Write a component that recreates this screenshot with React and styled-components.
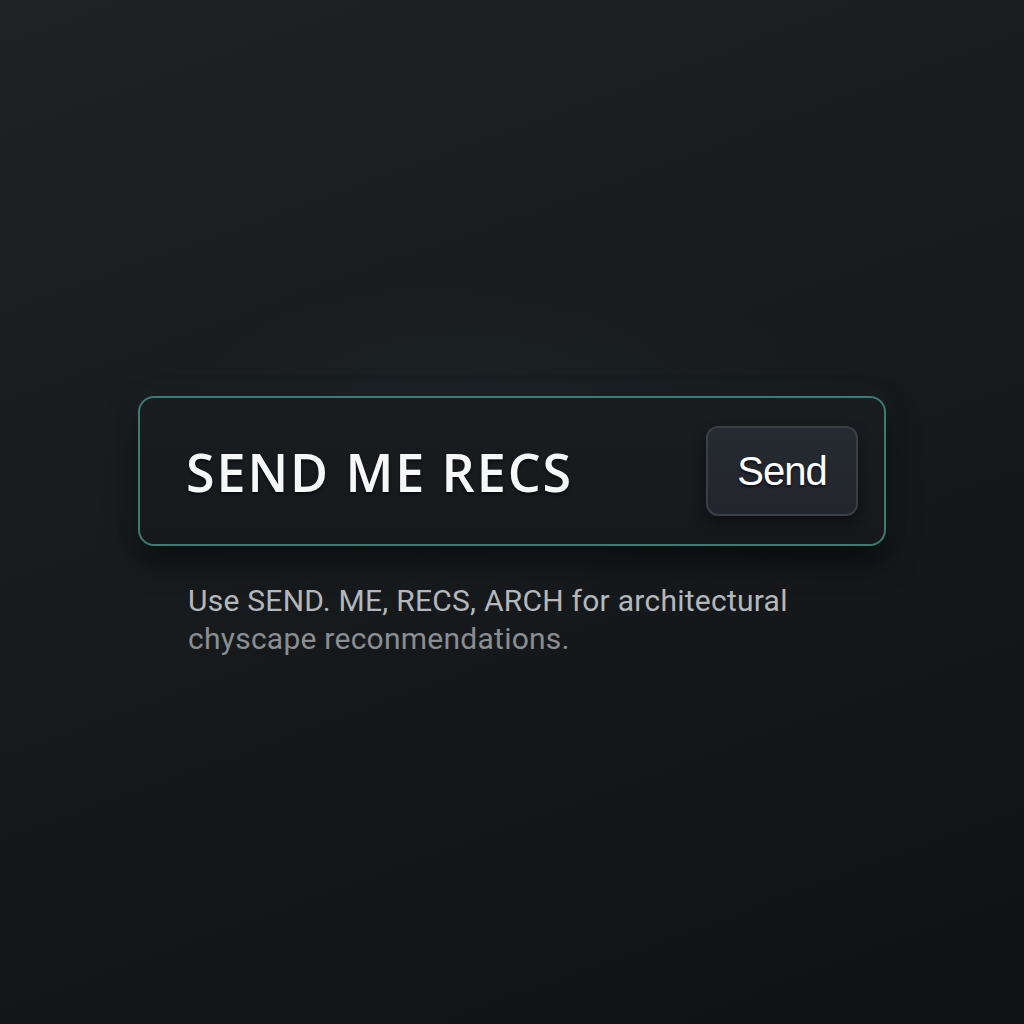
import React from 'react'
import styled, { createGlobalStyle } from 'styled-components';

const Global = createGlobalStyle`
  html, body {
    margin: 0;
    padding: 0;
    background: #121417;
  }
`;

function App() {
  return (
    <>
      <Global />
      <Page>
        <Column>
          <InputBox>
            <Query>SEND ME RECS</Query>
            <SendButton>Send</SendButton>
          </InputBox>
          <Hint>
            <HintLine>Use SEND. ME, RECS, ARCH for architectural</HintLine>
            <HintLine dim>chyscape reconmendations.</HintLine>
          </Hint>
        </Column>
      </Page>
    </>
  )
}

export default App;

const Page = styled.div`
  width: 1024px;
  height: 1024px;
  box-sizing: border-box;
  padding: 396px 0 0 138px;
  background:
    radial-gradient(ellipse 520px 240px at 510px 440px, rgba(40, 70, 70, 0.14), transparent 70%),
    linear-gradient(160deg, #1e2225 0%, #181b1e 45%, #0f1113 100%);
  font-family: "Open Sans", "Liberation Sans", sans-serif;
`;

const Column = styled.div`
  display: flex;
  flex-direction: column;
  width: 748px;
`;

const InputBox = styled.div`
  height: 150px;
  box-sizing: border-box;
  display: flex;
  align-items: center;
  justify-content: space-between;
  padding: 0 26px 0 46px;
  border: 2px solid #3c7a72;
  border-radius: 16px;
  background: linear-gradient(180deg, #1a1d20 0%, #16181b 100%);
  box-shadow: 0 14px 30px rgba(0, 0, 0, 0.6), 0 0 24px rgba(60, 120, 115, 0.12);
`;

const Query = styled.span`
  color: #f7f7f7;
  font-size: 52px;
  font-weight: 600;
  letter-spacing: 1.9px;
  text-shadow: 0 2px 3px rgba(0, 0, 0, 0.6);
`;

const SendButton = styled.button`
  width: 152px;
  height: 90px;
  border: 2px solid #3a3e45;
  border-radius: 12px;
  background: linear-gradient(180deg, #262a31 0%, #22262c 100%);
  box-shadow: 0 6px 14px rgba(0, 0, 0, 0.45);
  color: #ffffff;
  font-family: "Liberation Sans", Arial, sans-serif;
  font-size: 40px;
  letter-spacing: -1px;
  text-shadow: 0 2px 3px rgba(0, 0, 0, 0.6);
  padding: 0;
`;

const Hint = styled.div`
  margin: 36px 0 0 50px;
  font-family: Roboto, "Liberation Sans", sans-serif;
  font-size: 30px;
  line-height: 38px;
  letter-spacing: 0.25px;
`;

const HintLine = styled.div`
  color: ${p => (p.dim ? '#8a8e93' : '#b4b8bc')};
`;
